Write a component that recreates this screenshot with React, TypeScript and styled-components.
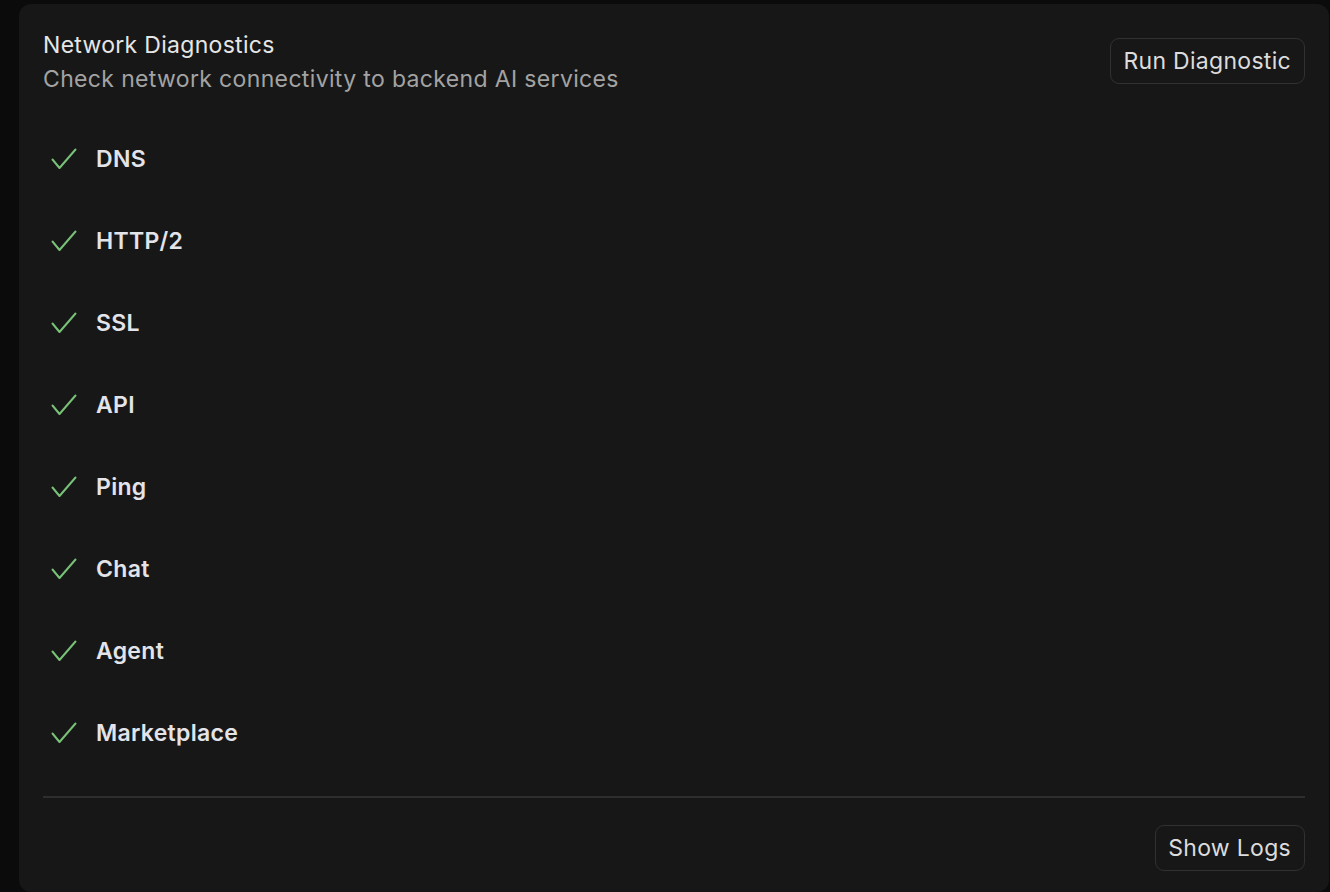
import styled, { createGlobalStyle } from 'styled-components';

const GlobalStyle = createGlobalStyle`
  html, body {
    margin: 0;
    padding: 0;
    background: #0b0b0b;
    font-family: Inter, "Noto Sans", "Liberation Sans", sans-serif;
    -webkit-font-smoothing: antialiased;
  }
`;

const checks = ['DNS', 'HTTP/2', 'SSL', 'API', 'Ping', 'Chat', 'Agent', 'Marketplace'];

function CheckMark() {
  return (
    <CheckIcon viewBox="0 0 26 22" fill="none">
      <path
        d="M1.5 11.5 L8.5 20 L24.5 1.5"
        stroke="#78c177"
        strokeWidth="2"
        strokeLinecap="round"
        strokeLinejoin="round"
      />
    </CheckIcon>
  );
}

export default function App() {
  return (
    <Page>
      <GlobalStyle />
      <Card>
        <Header>
          <Titles>
            <Title>Network Diagnostics</Title>
            <Subtitle>Check network connectivity to backend AI services</Subtitle>
          </Titles>
          <Button>Run Diagnostic</Button>
        </Header>
        <CheckList>
          {checks.map((name) => (
            <CheckRow key={name}>
              <CheckMark />
              <Label>{name}</Label>
            </CheckRow>
          ))}
        </CheckList>
        <Divider />
        <Footer>
          <Button>Show Logs</Button>
        </Footer>
      </Card>
    </Page>
  );
}

const Page = styled.div`
  min-height: 892px;
  padding: 4px 1px 0 19px;
  box-sizing: border-box;
  display: flex;
`;

const Card = styled.div`
  flex: 1;
  background: #171717;
  border-radius: 12px;
  padding: 26px 24px 20px 24px;
  display: flex;
  flex-direction: column;
`;

const Header = styled.div`
  display: flex;
  justify-content: space-between;
  align-items: flex-start;
`;

const Titles = styled.div`
  display: flex;
  flex-direction: column;
  gap: 4px;
`;

const Title = styled.div`
  font-size: 23px;
  line-height: 30px;
  letter-spacing: 0.3px;
  color: #e6e6e6;
`;

const Subtitle = styled.div`
  font-size: 23px;
  line-height: 30px;
  letter-spacing: 0.35px;
  color: #a3a3a3;
`;

const Button = styled.button`
  height: 46px;
  padding: 0 13px 0 12px;
  margin-top: 8px;
  background: #171717;
  border: 1.5px solid #313131;
  border-radius: 9px;
  color: #dcdcdc;
  font-family: inherit;
  font-size: 23px;
  letter-spacing: 0.3px;
  cursor: pointer;
`;

const CheckList = styled.div`
  display: flex;
  flex-direction: column;
  margin-top: 24px;
`;

const CheckRow = styled.div`
  display: flex;
  align-items: center;
  height: 82px;
  gap: 19px;
  padding-left: 8px;
`;

const CheckIcon = styled.svg`
  width: 26px;
  height: 22px;
  flex-shrink: 0;
`;

const Label = styled.span`
  font-size: 23px;
  font-weight: 600;
  letter-spacing: 0.3px;
  color: #e3e4ea;
`;

const Divider = styled.div`
  height: 1.5px;
  background: #2e2e2e;
  margin-top: 22px;
`;

const Footer = styled.div`
  display: flex;
  justify-content: flex-end;
  margin-top: 19px;
`;
